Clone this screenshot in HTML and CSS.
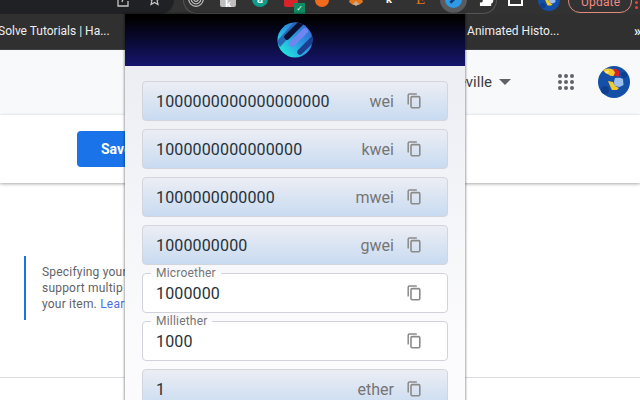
FILE: index.html
```html
<!DOCTYPE html>
<html lang="en">
<head>
<meta charset="utf-8">
<title>Unit converter</title>
<link rel="stylesheet" href="styles.css">
</head>
<body>
<svg class="defs" width="0" height="0" aria-hidden="true">
  <symbol id="copy" viewBox="0 0 14 16">
    <path d="M1.2 11.500V2.300Q1.200 1 2.500 1h7.300" fill="none" stroke="currentColor" stroke-width="1.500"/>
    <rect x="4" y="3.600" width="8.800" height="11.200" rx="1.300" fill="none" stroke="currentColor" stroke-width="1.600"/>
  </symbol>
  <symbol id="jayhawk" viewBox="0 0 32 32">
    <circle cx="16" cy="16" r="16" fill="#1450a8"/>
    <circle cx="7" cy="24" r="4" fill="#0f3f8f"/>
    <circle cx="26" cy="9" r="3" fill="#0f3f8f"/>
    <path d="M15 2.500q5 0 6.500 3.500l-.5 4.500-5.500-1z" fill="#d8232a"/>
    <path d="M5 4q5-2.500 10-.5l2 3-1.500 3.500q-3 .5-5-1.500-3-.5-5.500-4.500z" fill="#f4c92c"/>
    <path d="M17 12q5-1 8 1l.5 6-4 2-5-1q-1.500-4 .5-8z" fill="#9cc0ee"/>
    <path d="M10 15l5 1 2 4 4 2-2 2h-5l-1.500-3z" fill="#f4c92c"/>
    <path d="M7 5.500h4l-1 1H8z" fill="#fff"/>
  </symbol>
</svg>

<header class="browser">
  <div class="toolbar">
    <div class="omnibox">
      <svg class="share" viewBox="0 0 14 14"><path d="M1 2v11h10V8M5 9q1-5 8-6M10 0l3 3-3 3" fill="none" stroke="#c4c7c5" stroke-width="1.300"/></svg>
      <svg class="star" viewBox="0 0 14 14"><path d="M7 1l1.800 4 4.200.400-3.200 2.800 1 4.300L7 10.300 3.200 12.500l1-4.300L1 5.400l4.200-.400z" fill="none" stroke="#c4c7c5" stroke-width="1.300"/></svg>
    </div>
    <div class="extensions">
      <svg class="target" viewBox="0 0 16 16"><g fill="none" stroke="#bdbdbd" stroke-width="1.200"><circle cx="8" cy="8" r="7.300"/><circle cx="8" cy="8" r="4.800"/><circle cx="8" cy="8" r="2.300"/></g></svg>
      <span class="kbox">k</span>
      <span class="greenball">a</span>
      <span class="redext"><span class="badge">✓</span></span>
      <span class="orangeball"></span>
      <svg class="fox" viewBox="0 0 16 16"><path d="M1 2l5 3h4l5-3-1 6 1 3-4 3H5l-4-3 1-3z" fill="#e2761b"/><path d="M5 13l3-3 3 3-3 2z" fill="#c0ad9e"/></svg>
      <span class="kletter">k</span>
      <span class="eletter">E</span>
      <span class="active"><svg viewBox="0 0 16 16"><circle cx="8" cy="8" r="8" fill="#2e9be6"/><path d="M13.500 3L5 11" stroke="#123a73" stroke-width="2.500"/></svg></span>
      <svg class="puzzle" viewBox="0 0 16 16"><path d="M1 6h4V3q2.500-3 4 0v3h4v3q3 0 2 2.500t-2 1.500v3H1v-4q3 1 3-1.500T1 9.500z" fill="#fff"/></svg>
    </div>
    <span class="whitebox"></span>
    <svg class="tool-avatar"><use href="#jayhawk"/></svg>
    <span class="update">Update</span>
    <span class="menu-dots"><i></i><i></i></span>
  </div>
  <nav class="bookmarks">
    <span class="bookmark first">Solve Tutorials | Ha...</span>
    <span class="bookmark">The Animated Histo...</span>
    <span class="chevrons">»</span>
  </nav>
</header>

<main class="page">
  <div class="account-bar">
    <span class="store">Fayetteville</span>
    <span class="caret"></span>
    <span class="apps"><i></i><i></i><i></i><i></i><i></i><i></i><i></i><i></i><i></i></span>
    <svg class="avatar"><use href="#jayhawk"/></svg>
  </div>
  <div class="save-bar">
    <button class="save" type="button">Save draft</button>
  </div>
  <section class="content">
    <p class="notice">Specifying your<br>support multip<br>your item. <a href="#">Learn more</a></p>
  </section>
  <div class="rule"></div>
</main>

<aside class="popup">
  <div class="popup-head">
    <svg class="logo" viewBox="0 0 36 36">
      <defs>
        <linearGradient id="lg" x1="0.150" y1="0.900" x2="0.900" y2="0.200"><stop offset="0" stop-color="#22e6dc"/><stop offset="0.550" stop-color="#2a9ae0"/><stop offset="1" stop-color="#2f6fd8"/></linearGradient>
        <clipPath id="disc"><circle cx="18" cy="18" r="17.500"/></clipPath>
      </defs>
      <circle cx="18" cy="18" r="17.500" fill="url(#lg)"/>
      <g clip-path="url(#disc)" fill="none" stroke-linecap="round">
        <path d="M0 19L19-2 24 2 3 25z" fill="#2a66b8"/>
        <path d="M24 1L10 15" stroke="#0b1030" stroke-width="5.500"/>
        <path d="M28 9L15 22" stroke="#6f86ee" stroke-width="6"/>
        <path d="M40 13L23 30" stroke="#1c3f8f" stroke-width="5.500"/>
      </g>
    </svg>
  </div>
  <div class="popup-body">
    <div class="unit"><span class="value">1000000000000000000</span><span class="name">wei</span><svg class="copy"><use href="#copy"/></svg></div>
    <div class="unit"><span class="value">1000000000000000</span><span class="name">kwei</span><svg class="copy"><use href="#copy"/></svg></div>
    <div class="unit"><span class="value">1000000000000</span><span class="name">mwei</span><svg class="copy"><use href="#copy"/></svg></div>
    <div class="unit"><span class="value">1000000000</span><span class="name">gwei</span><svg class="copy"><use href="#copy"/></svg></div>
    <div class="unit outlined"><span class="legend">Microether</span><span class="value">1000000</span><svg class="copy"><use href="#copy"/></svg></div>
    <div class="unit outlined"><span class="legend">Milliether</span><span class="value">1000</span><svg class="copy"><use href="#copy"/></svg></div>
    <div class="unit"><span class="value">1</span><span class="name">ether</span><svg class="copy"><use href="#copy"/></svg></div>
  </div>
</aside>
</body>
</html>
```

FILE: styles.css
```css
* { box-sizing: border-box; }
html, body { margin: 0; height: 100%; }
body {
  width: 640px;
  height: 400px;
  overflow: hidden;
  position: relative;
  background: #fff;
  font-family: Roboto, "Liberation Sans", sans-serif;
}
.defs { position: absolute; }

/* browser chrome */
.browser { height: 50px; background: #35363a; }
.toolbar {
  height: 14px;
  display: flex;
  align-items: flex-start;
  overflow: hidden;
  background: #323232;
}
.toolbar svg, .toolbar span { flex: none; display: block; }
.omnibox {
  width: 174px;
  height: 14px;
  flex: none;
  display: flex;
  align-items: flex-start;
  background: #202124;
  border-radius: 0 0 14px 0;
  padding-left: 117px;
}
.share { width: 14px; height: 14px; margin-top: -7px; }
.star { width: 13px; height: 13px; margin: -7px 0 0 17px; }
.extensions {
  margin-left: 9px;
  width: 314px;
  height: 14px;
  flex: none;
  display: flex;
  align-items: flex-start;
  border: 1px solid #555;
  border-top: 0;
  border-radius: 0 0 14px 14px;
  padding-left: 4px;
}
.target { width: 16px; height: 16px; margin-top: -9px; }
.kbox {
  width: 16px; height: 7px; margin-left: 16px;
  background: #bdbdbd; color: #fff;
  font: 700 11px/6px "Liberation Serif", serif; text-align: center;
  border-radius: 0 0 2px 2px; overflow: hidden;
}
.greenball {
  width: 16px; height: 16px; margin: -9px 0 0 16px;
  background: #0f9d8a; border-radius: 50%; color: #fff;
  font: 700 11px/18px Roboto, sans-serif; text-align: center;
}
.redext {
  width: 14px; height: 7px; margin-left: 16px;
  background: #d8232a; border-radius: 0 0 2px 2px; position: relative;
}
.toolbar .badge {
  position: absolute; left: 10px; top: 3px;
  width: 11px; height: 11px;
  background: #0f8a63; color: #fff;
  font: 700 8px/11px "DejaVu Sans", sans-serif; text-align: center;
}
.orangeball { width: 14px; height: 14px; margin: -7px 0 0 17px; background: #f26a1b; border-radius: 50%; }
.fox { width: 16px; height: 16px; margin: -9px 0 0 19px; }
.kletter { margin: -6px 0 0 20px; width: 10px; color: #fff; font: 700 11px/11px Roboto, sans-serif; text-align: center; }
.eletter { margin: -9px 0 0 22px; width: 11px; color: #e2761b; font: 400 15px/16px "Liberation Serif", serif; }
.active {
  margin: -14px 0 0 13px; width: 27px; height: 27px;
  background: #5a5b5e; border-radius: 50%;
}
.toolbar .active { display: flex; align-items: center; justify-content: center; }
.active svg { width: 17px; height: 17px; }
.puzzle { width: 15px; height: 15px; margin: -9px 0 0 12px; }
.whitebox { width: 15px; height: 6px; margin-left: 11px; border: 2px solid #fff; border-top: 0; }
.tool-avatar { width: 22px; height: 22px; margin: -11px 0 0 15px; }
.update {
  width: 64px; height: 24px; margin: -11px 0 0 8px;
  border: 1px solid #e08a80; border-radius: 12px;
  color: #f28b82; font-size: 12px; line-height: 24px; padding-left: 12px;
  letter-spacing: .2px;
}
.menu-dots { margin: 1px 0 0 3px; width: 3px; }
.menu-dots i { display: block; width: 3px; height: 3px; margin-bottom: 2px; border-radius: 50%; background: #e8453c; }
.bookmarks {
  height: 36px;
  display: flex;
  align-items: center;
  color: #eceef0;
  font-size: 12px;
  padding-bottom: 1px;
  border-bottom: 1px solid #3f4043;
  background: #303030;
}
.bookmark { flex: none; }
.bookmark.first { margin-left: -2px; width: 335px; }
.bookmark + .bookmark { margin-left: 111px; width: 190px; }
.chevrons { flex: none; margin-left: auto; margin-right: 3px; font: 700 14px/14px Roboto, sans-serif; color: #e8eaed; }

/* page under the popup */
.page { height: 350px; }
.account-bar {
  height: 65px;
  background: #f8f9fa;
  display: flex;
  align-items: center;
  padding: 0 10px 2px 0;
  justify-content: flex-end;
  color: #3c4043;
}
.store { margin-right: 7px; font-size: 15px; }
.caret { width: 0; height: 0; border: 6px solid transparent; border-top-color: #5f6368; border-bottom: 0; margin-right: 47px; }
.apps { width: 16px; display: grid; grid-template-columns: repeat(3, 4px); gap: 2px; margin-right: 24px; }
.apps i { width: 4px; height: 4px; border-radius: 50%; background: #5f6368; }
.avatar { width: 32px; height: 32px; flex: none; }
.save-bar {
  height: 68px;
  padding: 16px 0 0 77px;
  background: #fff;
  box-shadow: 0 1px 3px rgba(60, 64, 67, .45);
  position: relative;
}
.save {
  width: 120px;
  height: 36px;
  border: 0;
  border-radius: 4px;
  background: #1a73e8;
  color: #fff;
  font: 700 14px Roboto, sans-serif;
  text-align: left;
  padding: 0 0 0 24px;
}
.content { height: 194px; padding: 73px 0 0 24px; }
.notice {
  margin: 0;
  height: 64px;
  border-left: 2px solid #1a73e8;
  padding: 8px 0 0 16px;
  color: #5f6368;
  font-size: 12px;
  line-height: 16px;
  letter-spacing: .2px;
  white-space: nowrap;
}
.notice a { color: #4a6ee0; text-decoration: none; }
.rule { height: 1px; background: #dadce0; }

/* popup */
.popup {
  position: absolute;
  left: 125px;
  top: 14px;
  width: 340px;
  height: 386px;
  overflow: hidden;
  background: linear-gradient(#e9ebf1, #fbfbfd 320px);
  box-shadow: 0 0 2px 1px rgba(0, 0, 0, .35);
}
.popup-head {
  height: 52px;
  background: linear-gradient(#000 4px, #15156e);
  display: flex;
  align-items: center;
  justify-content: center;
}
.logo { width: 36px; height: 36px; }
.popup-body {
  padding: 15px 17px 0;
  display: flex;
  flex-direction: column;
  gap: 8px;
}
.unit {
  height: 40px;
  flex: none;
  display: flex;
  align-items: center;
  padding: 0 13px;
  border: 1px solid #d3d5dc;
  border-radius: 4px;
  background: linear-gradient(#eceef4, #c8dbf1);
  position: relative;
}
.unit.outlined { background: #fff; border-color: #d2d2da; }
.value { flex: 1; color: #263238; font-size: 16px; letter-spacing: .15px; }
.name { color: #757575; font-size: 16px; margin-right: 13px; }
.copy { width: 14px; height: 16px; flex: none; color: #8a8a8a; margin-right: 13px; }
.legend {
  position: absolute;
  left: 8px;
  top: -8px;
  padding: 0 5px;
  background: linear-gradient(transparent 6px, #fff 6px);
  color: #757575;
  font-size: 12px;
  line-height: 14px;
  letter-spacing: .2px;
}
```
